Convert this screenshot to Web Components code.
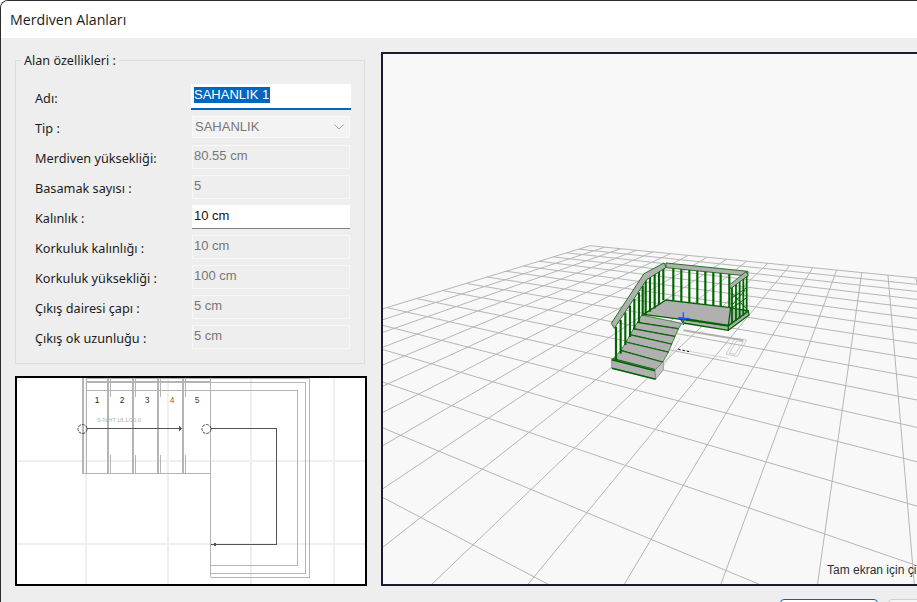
<!DOCTYPE html>
<html lang="tr">
<head>
<meta charset="utf-8">
<title>Merdiven Alanları</title>
<style>
  html, body { margin: 0; background: #fff; }
  body { font-family: "Noto Sans", "Liberation Sans", sans-serif; }
</style>
</head>
<body>

<stair-dialog heading="Merdiven Alanları">
  <area-form slot="form"></area-form>
  <plan-view slot="plan"></plan-view>
  <model-view slot="view"></model-view>
</stair-dialog>

<script>
// dialog frame: title bar, two columns, button row
class StairDialog extends HTMLElement {
    constructor() {
        super();
        this.attachShadow({ mode: "open" });
        this.shadowRoot.innerHTML = `
            <style>
                :host {
                    display: block;
                    width: 917px;
                    height: 602px;
                    overflow: hidden;
                    box-sizing: border-box;
                    border-top: 1px solid #2c2c2c;
                    border-left: 1px solid #2c2c2c;
                    border-top-left-radius: 8px;
                    background: #eeeeee;
                }
                header {
                    height: 37px;
                    background: #fff;
                    padding-left: 9px;
                    font: 14.2px/38px "Open Sans", sans-serif;
                    color: #1a1a1a;
                }
                main {
                    display: grid;
                    grid-template-columns: 352px 560px;
                    column-gap: 14px;
                    padding: 14px 0 0 14px;
                    height: 548px;
                    box-sizing: border-box;
                }
                .left {
                    display: flex;
                    flex-direction: column;
                    gap: 12px;
                    padding-top: 8px;
                }
                footer {
                    display: flex;
                    gap: 10px;
                    padding: 13px 0 0 779px;
                }
                button {
                    flex: none;
                    width: 98px;
                    height: 28px;
                    box-sizing: border-box;
                    background: #f6f6f6;
                    border: 1px solid #d0d0d0;
                    border-radius: 4px;
                }
                button.primary { border-color: #0067c0; background: #fff; }
            </style>
            <header>${this.getAttribute("heading")}</header>
            <main>
                <div class="left">
                    <slot name="form"></slot>
                    <slot name="plan"></slot>
                </div>
                <slot name="view"></slot>
            </main>
            <footer>
                <button class="primary"></button>
                <button></button>
            </footer>
        `;
    }
}

// one label + value row of the form
class FieldRow extends HTMLElement {
    constructor() {
        super();
        this.attachShadow({ mode: "open" });
    }

    connectedCallback() {
        const mode = this.getAttribute("mode") || "off";
        const value = this.getAttribute("value");
        const chevron = mode == "combo"
            ? `<svg width="10" height="6" viewBox="0 0 10 6"><path d="M.5.5 5 5 9.5.5" fill="none" stroke="#a6a6a6"/></svg>`
            : "";
        const text = mode == "focus" ? `<mark>${value}</mark>` : `<span>${value}</span>`;
        this.shadowRoot.innerHTML = `
            <style>
                :host {
                    display: grid;
                    grid-template-columns: 157px 158px;
                    align-items: center;
                    height: 24px;
                }
                label {
                    font-size: 12.7px;
                    color: #1c1c1c;
                    padding-top: 1px;
                    white-space: nowrap;
                }
                .box {
                    box-sizing: border-box;
                    height: 24px;
                    padding: 0 2px 0 1px;
                    display: flex;
                    align-items: center;
                    justify-content: space-between;
                    border: 1px solid #f8f8f8;
                    background: #eeeeee;
                    color: #777;
                    font: 13px "Liberation Sans", sans-serif;
                }
                .box span { padding-bottom: 3px; }
                .combo { background: #f3f3f3; height: 22px; padding: 0 5px 0 2px; }
                .combo span { padding-bottom: 2px; }
                .edit {
                    background: #fff;
                    border: 0;
                    border-bottom: 1px solid #808080;
                    color: #111;
                    padding-left: 2px;
                }
                .focus {
                    background: #fff;
                    border: 0;
                    border-bottom: 2px solid #0067c0;
                    margin: -1px -1px 0 -1px;
                    height: 26px;
                    padding-left: 3px;
                }
                mark {
                    background: #0067c0;
                    color: #fff;
                    line-height: 16px;
                    padding-right: 1px;
                    margin-bottom: 3px;
                }
            </style>
            <label>${this.getAttribute("label")}</label>
            <div class="box ${mode}">${text}${chevron}</div>
        `;
    }
}

class AreaForm extends HTMLElement {
    constructor() {
        super();
        this.attachShadow({ mode: "open" });
        const rows = [
            ["Adı:", "SAHANLIK 1", "focus"],
            ["Tip :", "SAHANLIK", "combo"],
            ["Merdiven yüksekliği:", "80.55 cm"],
            ["Basamak sayısı :", "5"],
            ["Kalınlık :", "10 cm", "edit"],
            ["Korkuluk kalınlığı :", "10 cm"],
            ["Korkuluk yüksekliği :", "100 cm"],
            ["Çıkış dairesi çapı :", "5 cm"],
            ["Çıkış ok uzunluğu :", "5 cm"]
        ];
        this.shadowRoot.innerHTML = `
            <style>
                :host {
                    display: block;
                    box-sizing: border-box;
                    width: 350px;
                    height: 304px;
                    border: 1px solid #dcdcdc;
                    position: relative;
                }
                .legend {
                    position: absolute;
                    left: 5px;
                    top: -8px;
                    padding: 0 3px;
                    background: #eeeeee;
                    font-size: 12.6px;
                    line-height: 16px;
                    color: #1c1c1c;
                }
                .rows {
                    display: flex;
                    flex-direction: column;
                    gap: 6px;
                    padding: 24px 0 0 19px;
                }
            </style>
            <div class="legend">Alan özellikleri :</div>
            <div class="rows">
                ${rows.map(r => `<field-row label="${r[0]}" value="${r[1]}" mode="${r[2] || "off"}"></field-row>`).join("")}
            </div>
        `;
    }
}

// 2d plan of the stair, drawn in page coordinates
class PlanView extends HTMLElement {
    constructor() {
        super();
        this.attachShadow({ mode: "open" });
        const grey = "#b4b4b4";
        const line = (x1, y1, x2, y2, w = 1, c = grey) =>
            `<line x1="${x1}" y1="${y1}" x2="${x2}" y2="${y2}" stroke-width="${w}" stroke="${c}"/>`;
        const risers = [108, 133, 158, 183];
        const numbers = [[97, "1", "#222"], [122, "2", "#222"], [147, "3", "#33336a"], [172, "4", "#a85a20"], [197, "5", "#444"]];
        this.shadowRoot.innerHTML = `
            <style>
                :host {
                    display: block;
                    box-sizing: border-box;
                    width: 352px;
                    height: 210px;
                    border: 2px solid #000;
                    background: #fff;
                    overflow: hidden;
                }
                svg { display: block; }
                text { font-family: "Liberation Sans", sans-serif; }
            </style>
            <svg width="348" height="206" viewBox="17 378 348 206" shape-rendering="crispEdges">
                <g>
                    ${line(85.5, 378, 85.5, 584, 2, "#efefef")}
                    ${line(168, 378, 168, 584, 2, "#efefef")}
                    ${line(251, 378, 251, 584, 2, "#efefef")}
                    ${line(334, 378, 334, 584, 2, "#efefef")}
                    ${line(17, 461, 365, 461, 2, "#efefef")}
                    ${line(17, 544, 365, 544, 2, "#efefef")}
                </g>
                ${line(83, 378, 83, 474, 2)}
                ${line(86, 378, 86, 474)}
                ${line(83, 473.5, 210.5, 473.5)}
                ${line(86, 381.5, 210.5, 381.5)}
                ${line(210.5, 378, 210.5, 577)}
                ${line(86, 378.5, 309.5, 378.5)}
                ${line(86, 382.5, 305.5, 382.5)}
                ${line(86, 390.5, 297.5, 390.5)}
                ${line(309.5, 378, 309.5, 577.5)}
                ${line(305.5, 382, 305.5, 573.5)}
                ${line(297.5, 390, 297.5, 565.5)}
                ${line(210, 565.5, 298, 565.5)}
                ${line(210, 573.5, 306, 573.5)}
                ${line(211, 577.5, 310, 577.5)}
                ${risers.map(x => line(x, 378, x, 474, 2) + line(x + 2.5, 378, x + 2.5, 397) + line(x + 2.5, 455, x + 2.5, 474)).join("")}
                ${numbers.map(n => `<text x="${n[0]}" y="403" font-size="8.5" text-anchor="middle" fill="${n[2]}">${n[1]}</text>`).join("")}
                <text x="97" y="422" font-size="5.7" fill="#a8b4b0">S-NiHT 18.1/30.0</text>
                <g fill="none" stroke="#555" stroke-width="1">
                    <path d="M87 428.5H181M179 426.5l2.5 2-2.5 2M211 428.5H276.5V544.5H211"/>
                    <circle cx="82.5" cy="429" r="4.5" stroke-dasharray="3 1" stroke="#444" shape-rendering="auto"/>
                    <circle cx="206.5" cy="429" r="4.5" stroke-dasharray="3 1" stroke="#444" shape-rendering="auto"/>
                </g>
                <rect x="214" y="543" width="2" height="3" fill="#555"/>
            </svg>
        `;
    }
}

// perspective floor + stair model, viewBox is in page coordinates
class ModelView extends HTMLElement {
    constructor() {
        super();
        this.attachShadow({ mode: "open" });
        this.shadowRoot.innerHTML = `
            <style>
                :host {
                    display: block;
                    box-sizing: border-box;
                    width: 560px;
                    height: 534px;
                    border: 2px solid #1b1b33;
                    background: #f8f8f8;
                    position: relative;
                    overflow: hidden;
                }
                svg { display: block; }
                .hint {
                    position: absolute;
                    left: 444px;
                    top: 508px;
                    font: 12px/16px "Liberation Sans", sans-serif;
                    color: #26303a;
                    white-space: nowrap;
                }
            </style>
            <svg width="556" height="530" viewBox="383 54 556 530">
                <g id="floor" stroke="#b6b6b6" stroke-width="1"></g>
                <g id="stair"></g>
            </svg>
            <div class="hint">Tam ekran için çi</div>
        `;
        this.drawFloor();
        this.drawStair();
    }

    // grid lines through two vanishing points, measured from the reference
    drawFloor() {
        const vpA = [-257, 162], vpB = [878, 158];
        const c = [590, 245.7];
        const a = 0.01735, b = 0.0376, nu = 18, nv = 20;
        const pt = (u, v) => {
            const w = 1 - a * u - b * v;
            return [
                (c[0] - a * u * vpA[0] - b * v * vpB[0]) / w,
                (c[1] - a * u * vpA[1] - b * v * vpB[1]) / w
            ];
        };
        // stop short of the camera plane, points flip behind it
        const vMax = u => Math.min(nv, (0.97 - a * u) / b);
        const uMax = v => Math.min(nu, (0.97 - b * v) / a);
        let out = "";
        for (let u = 0; u <= nu; u++) {
            const p = pt(u, 0), q = pt(u, vMax(u));
            out += `<line x1="${p[0]}" y1="${p[1]}" x2="${q[0]}" y2="${q[1]}"/>`;
        }
        for (let v = 0; v <= nv; v++) {
            const p = pt(0, v), q = pt(uMax(v), v);
            out += `<line x1="${p[0]}" y1="${p[1]}" x2="${q[0]}" y2="${q[1]}"/>`;
        }
        this.shadowRoot.querySelector("#floor").innerHTML = out;
    }

    // stair coords are the 3x crop of (600,255), scaled back with the transform
    drawStair() {
        const green = "#006400", body = "#b0b0b0";
        const poly = (pts, sw = 4) => `<polygon points="${pts}" fill="${body}" stroke="${green}" stroke-width="${sw}" stroke-linejoin="round"/>`;
        const bar = (x1, y1, x2, y2, w = 6.5) => `<line x1="${x1}" y1="${y1}" x2="${x2}" y2="${y2}" stroke="${green}" stroke-width="${w}"/>`;
        let s = "";

        // footprint left on the floor behind the stair
        s += `<path d="M250 226 430 256" stroke="#b0b0b0" stroke-width="6" fill="none"/>`;
        s += `<path d="M405 250 440 255 412 304 378 298ZM410 258 430 260 405 298 388 295Z" stroke="#b8b8b8" stroke-width="2" fill="none"/>`;
        s += `<path d="M190 335 240 250M245 285 385 310" stroke="#c0c0c0" stroke-width="2" fill="none"/>`;
        s += `<path d="M235 283 268 290" stroke="#111" stroke-width="3" stroke-dasharray="7 6" fill="none"/>`;

        // back balusters go behind the landing floor edge
        [220, 244, 268, 292, 316, 340, 362, 388].forEach((x, i) => { s += bar(x, 38 + i * 2.6, x, 136 + i * 3.4); });

        // landing slab and floor
        s += poly("385,212 445,168 447,180 385,226");
        s += poly("240,190 385,212 385,226 250,204");
        s += poly("198,135 392,158 445,168 385,212 130,178");
        s += `<path d="M392 158 385 212" stroke="${green}" stroke-width="4"/>`;
        s += `<path d="M236 189 385 212" stroke="${green}" stroke-width="6"/>`;

        // landing side balusters
        [[137, 70, 182], [150, 62, 170], [164, 52, 160], [177, 46, 150], [190, 38, 136]].forEach(b => { s += bar(b[0], b[1], b[0], b[2]); });
        // right hand balusters
        [[396, 92, 205], [408, 84, 198], [419, 76, 190], [430, 68, 182], [440, 60, 170]].forEach(b => { s += bar(b[0], b[1], b[0], b[2], 5.5); });
        s += `<path d="M394 130 440 98M394 160 440 128M396 115 438 160M396 150 436 105" stroke="${green}" stroke-width="3" fill="none"/>`;

        // treads, top step first so the lower ones overlap
        const left = [[125, 180], [112, 203], [100, 222], [90, 240], [78, 262], [62, 287], [38, 312]];
        const right = [[245, 205], [235, 222], [225, 245], [215, 268], [205, 292], [188, 322], [165, 345]];
        for (let i = 1; i < left.length; i++) {
            s += poly(`${left[i - 1]} ${right[i - 1]} ${right[i]} ${left[i]}`, 2);
            s += `<path d="M${left[i]} ${right[i]}" stroke="${green}" stroke-width="5.5"/>`;
        }
        // bottom slab
        s += `<polygon points="35,312 165,345 167,372 35,340" fill="${body}" stroke="#777" stroke-width="2"/>`;
        s += `<polygon points="165,345 190,320 190,345 167,372" fill="#c4c4c4" stroke="#777" stroke-width="2"/>`;
        s += `<path d="M35 314 165 347M36 340 167 373" stroke="${green}" stroke-width="4.5" fill="none"/>`;

        // stair balusters over the steps
        [[48, 215, 318], [62, 195, 296], [76, 172, 270], [90, 152, 246], [103, 132, 224], [117, 112, 204], [128, 92, 182]].forEach(b => { s += bar(b[0], b[1], b[0], b[2]); });

        // hand rails
        s += poly("34,205 132,56 192,24 199,37 140,74 43,220", 2.5);
        s += poly("198,24 444,49 443,63 198,38", 2.5);
        s += poly("388,90 438,50 445,61 392,101", 2.5);

        // axis cross
        s += `<path d="M250 172V210M232 190H268" stroke="#2a50ff" stroke-width="4" fill="none"/>`;

        const g = this.shadowRoot.querySelector("#stair");
        g.setAttribute("transform", "translate(600 255) scale(.3333)");
        g.innerHTML = s;
    }
}

// children first, the form's rows upgrade when its shadow is filled
customElements.define("field-row", FieldRow);
customElements.define("area-form", AreaForm);
customElements.define("plan-view", PlanView);
customElements.define("model-view", ModelView);
customElements.define("stair-dialog", StairDialog);
</script>
</body>
</html>
